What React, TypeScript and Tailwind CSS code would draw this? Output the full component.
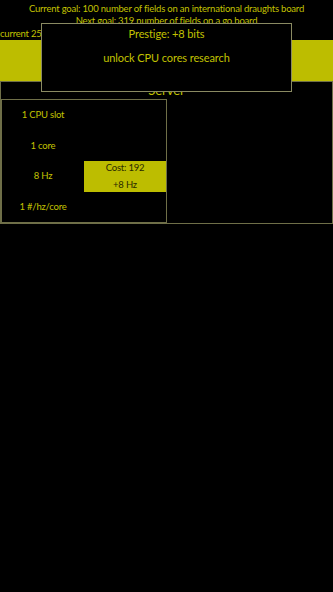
import React from "react";

export default function App() {
  return (
    <div className="relative min-h-[592px] w-full bg-black text-[#c2c200] font-['Lato',sans-serif]">
      <div className="pt-[3px] text-[9.5px] tracking-[-0.2px]">
        <p className="text-center leading-[12px]">
          Current goal: 100 number of fields on an international draughts board
        </p>
        <p className="text-center leading-[12px]">
          Next goal: 319 number of fields on a go board
        </p>
        <p className="text-left leading-[13px]">current 25</p>
      </div>
      <div className="h-[41px] bg-[#bdbd00]" />
      <div className="border border-[#6f6f48]">
        <div className="text-center text-[13px] leading-[17px]">Server</div>
        <div className="flex">
          <div className="grid h-[124px] w-[166px] grid-cols-2 grid-rows-4 border border-[#6f6f48] text-[9.5px] tracking-[-0.2px]">
            <div className="flex items-center justify-center">1 CPU slot</div>
            <div />
            <div className="flex items-center justify-center">1 core</div>
            <div />
            <div className="flex items-center justify-center">8 Hz</div>
            <div className="flex flex-col items-center justify-center gap-[5px] bg-[#bdbd00] leading-[12px] text-[#2a2a00]">
              <span>Cost: 192</span>
              <span>+8 Hz</span>
            </div>
            <div className="flex items-center justify-center">1 #/hz/core</div>
            <div />
          </div>
          <div className="flex-1" />
        </div>
      </div>
      <div className="absolute left-[41px] top-[23px] h-[69px] w-[251px] border border-[#8a8a62] bg-black pt-[2px] text-center text-[11px] tracking-[-0.1px]">
        <p className="leading-[16px]">Prestige: +8 bits</p>
        <p className="mt-[8px] leading-[16px]">unlock CPU cores research</p>
      </div>
    </div>
  );
}
